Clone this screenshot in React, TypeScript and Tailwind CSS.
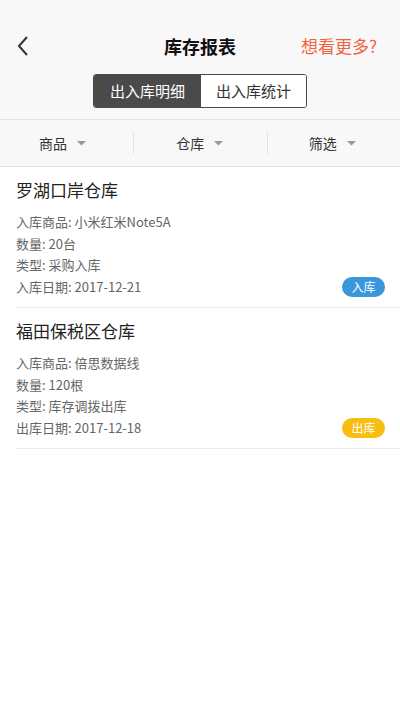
import React from "react";

const font = { fontFamily: '"Noto Sans CJK SC", "Noto Sans", sans-serif' };

function Caret() {
  return (
    <svg width="9" height="5" viewBox="0 0 9 5" className="ml-[10px]">
      <path d="M0 0 L9 0 L4.5 4.5 Z" fill="#999" />
    </svg>
  );
}

type Item = {
  name: string;
  goods: string;
  qty: string;
  type: string;
  dateLabel: string;
  date: string;
  badge: string;
  color: string;
};

const items: Item[] = [
  {
    name: "罗湖口岸仓库",
    goods: "小米红米Note5A",
    qty: "20台",
    type: "采购入库",
    dateLabel: "入库日期",
    date: "2017-12-21",
    badge: "入库",
    color: "bg-[#3a97dc]",
  },
  {
    name: "福田保税区仓库",
    goods: "倍思数据线",
    qty: "120根",
    type: "库存调拨出库",
    dateLabel: "出库日期",
    date: "2017-12-18",
    badge: "出库",
    color: "bg-[#f7bd0f]",
  },
];

const filters = [
  { t: "商品", cls: "pl-[39px] justify-start" },
  { t: "仓库", cls: "pl-[42px] justify-start" },
  { t: "筛选", cls: "pl-[41px] justify-start" },
];

export default function App() {
  return (
    <div className="w-[400px] h-[710px] bg-white" style={font}>
      <div className="bg-[#f8f8f8] pt-[28px] pb-[11px] border-b border-[#e3e3e3]">
        <div className="relative h-[36px] flex items-center justify-center">
          <svg
            width="12"
            height="20"
            viewBox="0 0 12 20"
            className="absolute left-[17px] top-[8px]"
          >
            <path d="M10 1 L2 10 L10 19" fill="none" stroke="#333" strokeWidth="2" />
          </svg>
          <span className="text-[18px] font-bold text-[#111] leading-none">库存报表</span>
          <span className="absolute right-[23px] top-[8px] text-[17px] leading-[20px] text-[#f0623f]">
            想看更多?
          </span>
        </div>
        <div className="mt-[10px] flex justify-center">
          <div className="flex h-[34px] rounded-[3px] border border-[#4a4a4a] overflow-hidden">
            <div className="w-[107px] bg-[#4a4a4a] text-white text-[15px] flex items-center justify-center">
              出入库明细
            </div>
            <div className="w-[105px] bg-white text-[#333] text-[15px] flex items-center justify-center">
              出入库统计
            </div>
          </div>
        </div>
      </div>
      <div className="bg-[#f8f8f8] h-[47px] flex items-center border-b border-[#e3e3e3]">
        {filters.map((f, i) => (
          <div key={f.t} className="flex-1 flex items-center">
            {i > 0 && <div className="w-px h-[22px] bg-[#e3e3e3]" />}
            <div className={`flex-1 flex items-center text-[14px] text-[#333] ${f.cls}`}>
              {f.t}
              <Caret />
            </div>
          </div>
        ))}
      </div>
      {items.map((it) => (
        <div key={it.name} className="ml-4 border-b border-[#ececec] pt-[11px] pb-[10px] pr-[15px]">
          <div className="text-[17px] leading-[24px] text-[#222]">{it.name}</div>
          <div className="mt-[9px] flex items-end justify-between">
            <div className="text-[13px] leading-[21.5px] text-[#666]">
              <div>入库商品: {it.goods}</div>
              <div>数量: {it.qty}</div>
              <div>类型: {it.type}</div>
              <div>
                {it.dateLabel}: {it.date}
              </div>
            </div>
            <div
              className={`${it.color} w-[43px] h-[20px] rounded-full text-white text-[12px] flex items-center justify-center`}
            >
              {it.badge}
            </div>
          </div>
        </div>
      ))}
    </div>
  );
}
